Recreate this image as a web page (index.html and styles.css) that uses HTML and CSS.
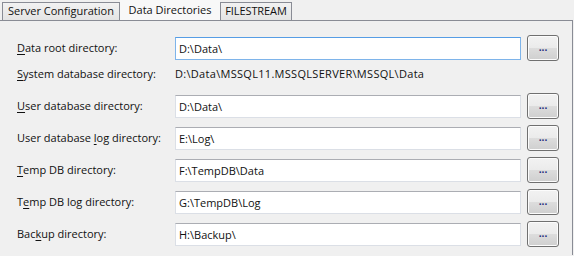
FILE: index.html
```html
<!DOCTYPE html>
<html>
<head>
<meta charset="utf-8">
<link rel="stylesheet" href="styles.css">
</head>
<body>
<div class="tabs">
  <div class="tab tab-sc">Server Configuration</div>
  <div class="tab tab-active">Data Directories</div>
  <div class="tab tab-fs">FILESTREAM</div>
</div>
<div class="panel">
  <div class="row">
    <label class="lbl"><u>D</u>ata root directory:</label>
    <div class="field focused">D:\Data\</div>
    <div class="btn">...</div>
  </div>
  <div class="row row-text">
    <label class="lbl"><u>S</u>ystem database directory:</label>
    <div class="value">D:\Data\MSSQL11.MSSQLSERVER\MSSQL\Data</div>
  </div>
  <div class="row">
    <label class="lbl"><u>U</u>ser database directory:</label>
    <div class="field">D:\Data\</div>
    <div class="btn">...</div>
  </div>
  <div class="row">
    <label class="lbl">User database <u>l</u>og directory:</label>
    <div class="field">E:\Log\</div>
    <div class="btn">...</div>
  </div>
  <div class="row">
    <label class="lbl"><u>T</u>emp DB directory:</label>
    <div class="field">F:\TempDB\Data</div>
    <div class="btn">...</div>
  </div>
  <div class="row">
    <label class="lbl">T<u>e</u>mp DB log directory:</label>
    <div class="field">G:\TempDB\Log</div>
    <div class="btn">...</div>
  </div>
  <div class="row">
    <label class="lbl">Bac<u>k</u>up directory:</label>
    <div class="field">H:\Backup\</div>
    <div class="btn">...</div>
  </div>
</div>
</body>
</html>
```

FILE: styles.css
```css
html, body {
  margin: 0;
  padding: 0;
  background: #f0f0f0;
  font-family: "Open Sans", "Liberation Sans", Arial, sans-serif;
  font-size: 11px;
  color: #111;
  width: 574px;
  height: 256px;
  overflow: hidden;
}

.tabs {
  display: flex;
  height: 20px;
  align-items: flex-end;
  padding-left: 2px;
}

.tab {
  box-sizing: border-box;
  height: 18px;
  line-height: 16px;
  border: 1px solid #898c95;
  border-bottom: none;
  background: linear-gradient(#f2f2f2, #e4e4e4);
  text-align: center;
  white-space: nowrap;
}

.tab-sc {
  width: 118px;
}

.tab-active {
  height: 20px;
  width: 100px;
  border-color: transparent;
  background: #f8f8f8;
  line-height: 18px;
  padding-bottom: 2px;
}

.tab-fs {
  width: 72px;
  letter-spacing: -0.1px;
}

.panel {
  border-top: 1px solid #898c95;
  border-right: 1px solid #898c95;
  width: 573px;
  height: 235px;
  box-sizing: border-box;
  padding: 14px 0 0 17px;
  display: flex;
  flex-direction: column;
  gap: 6px;
}

.row {
  display: flex;
  align-items: center;
  height: 26px;
}

.row-text {
  height: 20px;
  align-items: flex-start;
}

.lbl {
  width: 158px;
  flex: none;
  line-height: 14px;
}

.lbl u {
  text-decoration-thickness: 1px;
  text-underline-offset: 2px;
}

.value {
  line-height: 14px;
  letter-spacing: 0.3px;
}

.field {
  box-sizing: border-box;
  width: 346px;
  height: 23px;
  background: #fff;
  border: 1px solid #dbdfe6;
  border-top-color: #abadb3;
  padding: 0 3px;
  line-height: 21px;
  flex: none;
}

.field.focused {
  border-color: #7eb4ea;
  border-top-color: #569de5;
}

.btn {
  box-sizing: border-box;
  margin-left: 6px;
  width: 32px;
  height: 26px;
  border: 1px solid #707070;
  border-radius: 3px;
  background: linear-gradient(#f2f2f2 0%, #ebebeb 50%, #dddddd 50%, #cfcfcf 100%);
  box-shadow: inset 0 0 0 1px #fcfcfc;
  text-align: center;
  line-height: 22px;
  color: #1a2a7a;
  font-weight: bold;
  font-size: 10px;
}
```
